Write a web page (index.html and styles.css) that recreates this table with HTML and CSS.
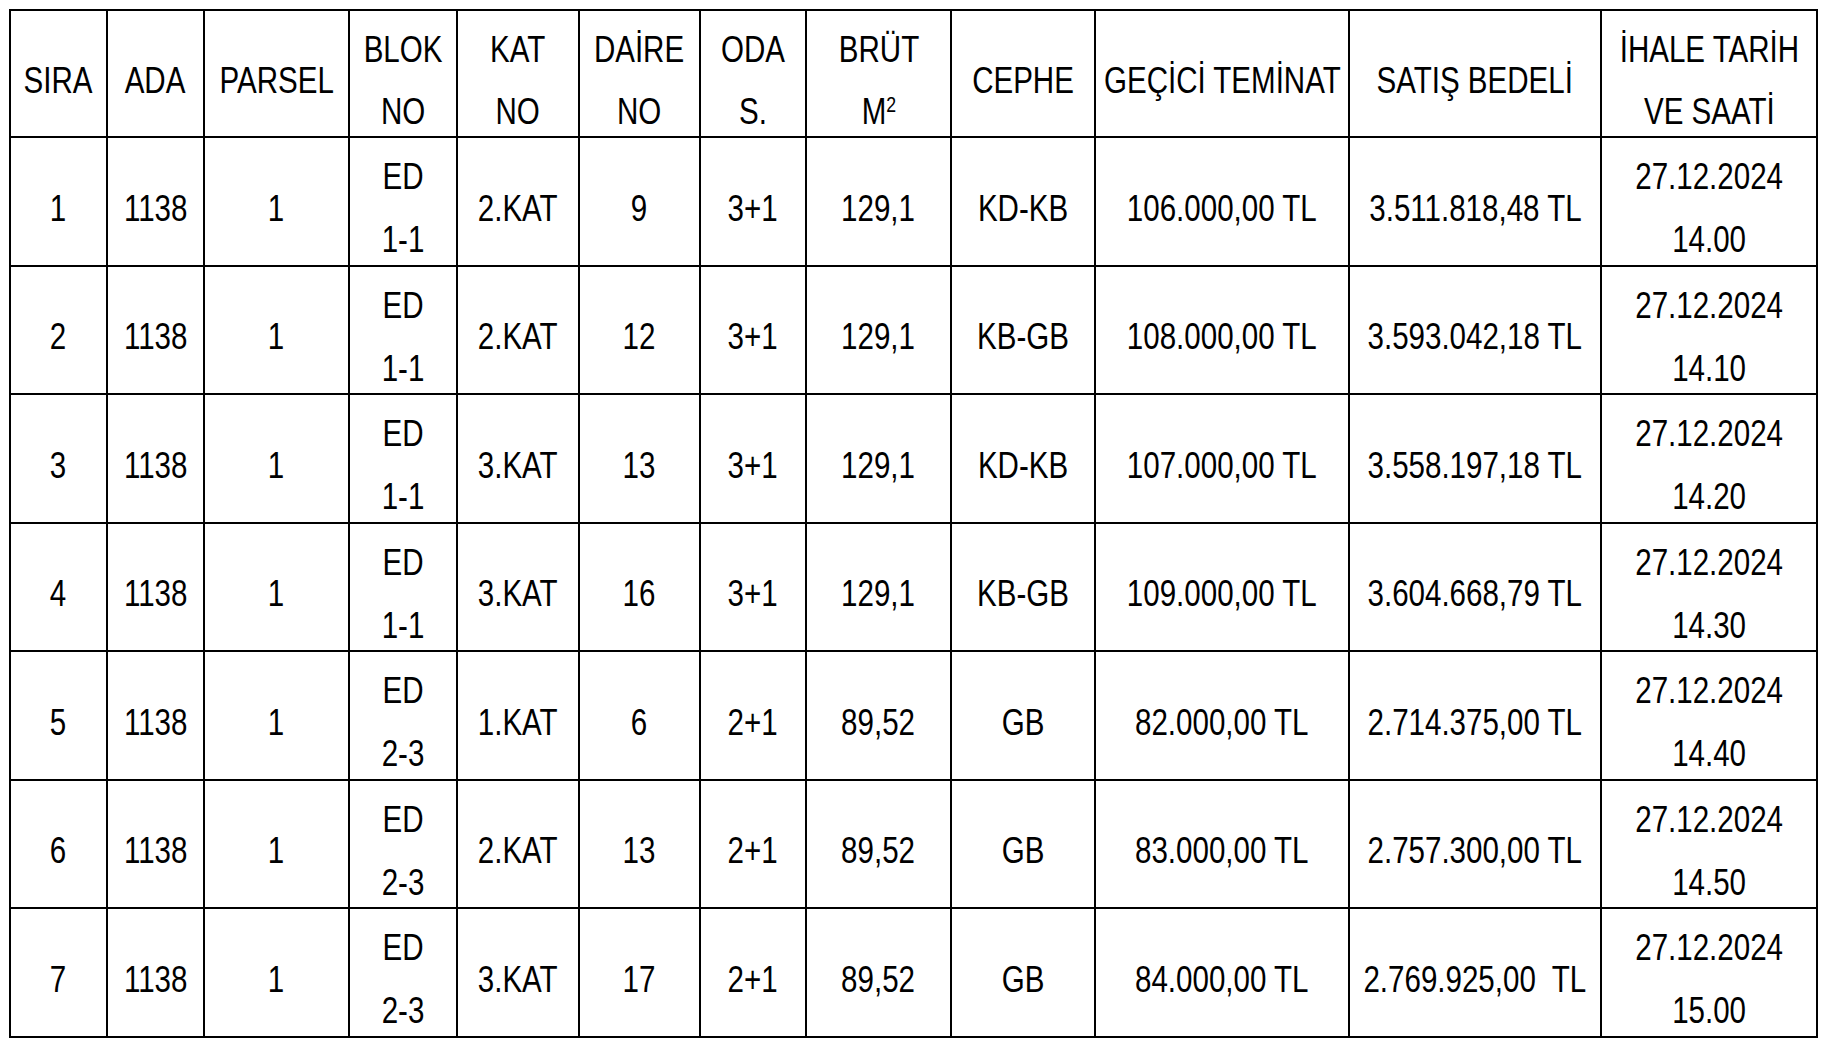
FILE: index.html
```html
<!DOCTYPE html>
<html lang="tr">
<head>
<meta charset="utf-8">
<title>İhale Listesi</title>
<link rel="stylesheet" href="styles.css">
</head>
<body>
<table class="grid">
  <colgroup>
    <col class="w-sira"><col class="w-ada"><col class="w-parsel"><col class="w-blok"><col class="w-kat"><col class="w-daire"><col class="w-oda"><col class="w-brut"><col class="w-cephe"><col class="w-teminat"><col class="w-bedel"><col class="w-tarih">
  </colgroup>
  <thead>
    <tr>
      <th><div class="v"><span class="t">SIRA</span></div></th>
      <th><div class="v"><span class="t">ADA</span></div></th>
      <th><div class="v"><span class="t">PARSEL</span></div></th>
      <th><div class="v"><span class="t">BLOK<br>NO</span></div></th>
      <th><div class="v"><span class="t">KAT<br>NO</span></div></th>
      <th><div class="v"><span class="t">DAİRE<br>NO</span></div></th>
      <th><div class="v"><span class="t">ODA<br>S.</span></div></th>
      <th><div class="v"><span class="t">BRÜT<br>M<sup>2</sup></span></div></th>
      <th><div class="v"><span class="t">CEPHE</span></div></th>
      <th><div class="v"><span class="t">GEÇİCİ TEMİNAT</span></div></th>
      <th><div class="v"><span class="t">SATIŞ BEDELİ</span></div></th>
      <th><div class="v"><span class="t">İHALE TARİH<br>VE SAATİ</span></div></th>
    </tr>
  </thead>
  <tbody>
    <tr>
      <td><div class="v"><span class="t">1</span></div></td><td><div class="v"><span class="t">1138</span></div></td><td><div class="v"><span class="t">1</span></div></td>
      <td><div class="v"><span class="t">ED<br>1-1</span></div></td><td><div class="v"><span class="t">2.KAT</span></div></td><td><div class="v"><span class="t">9</span></div></td>
      <td><div class="v"><span class="t">3+1</span></div></td><td><div class="v"><span class="t">129,1</span></div></td><td><div class="v"><span class="t">KD-KB</span></div></td>
      <td><div class="v"><span class="t">106.000,00 TL</span></div></td><td><div class="v"><span class="t">3.511.818,48 TL</span></div></td><td><div class="v"><span class="t">27.12.2024<br>14.00</span></div></td>
    </tr>
    <tr>
      <td><div class="v"><span class="t">2</span></div></td><td><div class="v"><span class="t">1138</span></div></td><td><div class="v"><span class="t">1</span></div></td>
      <td><div class="v"><span class="t">ED<br>1-1</span></div></td><td><div class="v"><span class="t">2.KAT</span></div></td><td><div class="v"><span class="t">12</span></div></td>
      <td><div class="v"><span class="t">3+1</span></div></td><td><div class="v"><span class="t">129,1</span></div></td><td><div class="v"><span class="t">KB-GB</span></div></td>
      <td><div class="v"><span class="t">108.000,00 TL</span></div></td><td><div class="v"><span class="t">3.593.042,18 TL</span></div></td><td><div class="v"><span class="t">27.12.2024<br>14.10</span></div></td>
    </tr>
    <tr>
      <td><div class="v"><span class="t">3</span></div></td><td><div class="v"><span class="t">1138</span></div></td><td><div class="v"><span class="t">1</span></div></td>
      <td><div class="v"><span class="t">ED<br>1-1</span></div></td><td><div class="v"><span class="t">3.KAT</span></div></td><td><div class="v"><span class="t">13</span></div></td>
      <td><div class="v"><span class="t">3+1</span></div></td><td><div class="v"><span class="t">129,1</span></div></td><td><div class="v"><span class="t">KD-KB</span></div></td>
      <td><div class="v"><span class="t">107.000,00 TL</span></div></td><td><div class="v"><span class="t">3.558.197,18 TL</span></div></td><td><div class="v"><span class="t">27.12.2024<br>14.20</span></div></td>
    </tr>
    <tr>
      <td><div class="v"><span class="t">4</span></div></td><td><div class="v"><span class="t">1138</span></div></td><td><div class="v"><span class="t">1</span></div></td>
      <td><div class="v"><span class="t">ED<br>1-1</span></div></td><td><div class="v"><span class="t">3.KAT</span></div></td><td><div class="v"><span class="t">16</span></div></td>
      <td><div class="v"><span class="t">3+1</span></div></td><td><div class="v"><span class="t">129,1</span></div></td><td><div class="v"><span class="t">KB-GB</span></div></td>
      <td><div class="v"><span class="t">109.000,00 TL</span></div></td><td><div class="v"><span class="t">3.604.668,79 TL</span></div></td><td><div class="v"><span class="t">27.12.2024<br>14.30</span></div></td>
    </tr>
    <tr>
      <td><div class="v"><span class="t">5</span></div></td><td><div class="v"><span class="t">1138</span></div></td><td><div class="v"><span class="t">1</span></div></td>
      <td><div class="v"><span class="t">ED<br>2-3</span></div></td><td><div class="v"><span class="t">1.KAT</span></div></td><td><div class="v"><span class="t">6</span></div></td>
      <td><div class="v"><span class="t">2+1</span></div></td><td><div class="v"><span class="t">89,52</span></div></td><td><div class="v"><span class="t">GB</span></div></td>
      <td><div class="v"><span class="t">82.000,00 TL</span></div></td><td><div class="v"><span class="t">2.714.375,00 TL</span></div></td><td><div class="v"><span class="t">27.12.2024<br>14.40</span></div></td>
    </tr>
    <tr>
      <td><div class="v"><span class="t">6</span></div></td><td><div class="v"><span class="t">1138</span></div></td><td><div class="v"><span class="t">1</span></div></td>
      <td><div class="v"><span class="t">ED<br>2-3</span></div></td><td><div class="v"><span class="t">2.KAT</span></div></td><td><div class="v"><span class="t">13</span></div></td>
      <td><div class="v"><span class="t">2+1</span></div></td><td><div class="v"><span class="t">89,52</span></div></td><td><div class="v"><span class="t">GB</span></div></td>
      <td><div class="v"><span class="t">83.000,00 TL</span></div></td><td><div class="v"><span class="t">2.757.300,00 TL</span></div></td><td><div class="v"><span class="t">27.12.2024<br>14.50</span></div></td>
    </tr>
    <tr>
      <td><div class="v"><span class="t">7</span></div></td><td><div class="v"><span class="t">1138</span></div></td><td><div class="v"><span class="t">1</span></div></td>
      <td><div class="v"><span class="t">ED<br>2-3</span></div></td><td><div class="v"><span class="t">3.KAT</span></div></td><td><div class="v"><span class="t">17</span></div></td>
      <td><div class="v"><span class="t">2+1</span></div></td><td><div class="v"><span class="t">89,52</span></div></td><td><div class="v"><span class="t">GB</span></div></td>
      <td><div class="v"><span class="t">84.000,00 TL</span></div></td><td><div class="v"><span class="t">2.769.925,00&nbsp; TL</span></div></td><td><div class="v"><span class="t">27.12.2024<br>15.00</span></div></td>
    </tr>
  </tbody>
</table>
</body>
</html>
```
FILE: styles.css
```css
html, body {
  margin: 0;
  padding: 0;
  background: #ffffff;
}

body {
  padding: 9px 0 0 9px;
  font-family: "Liberation Sans", Arial, sans-serif;
  font-size: 36px;
  color: #000;
}

.grid {
  border-collapse: separate;
  border-spacing: 0;
  table-layout: fixed;
  width: 1809px;
  border-left: 2px solid #000;
  border-top: 2px solid #000;
}

.w-sira { width: 97px; }
.w-ada { width: 97px; }
.w-parsel { width: 145px; }
.w-blok { width: 108px; }
.w-kat { width: 122px; }
.w-daire { width: 121px; }
.w-oda { width: 106px; }
.w-brut { width: 145px; }
.w-cephe { width: 144px; }
.w-teminat { width: 254px; }
.w-bedel { width: 252px; }
.w-tarih { width: 216px; }

.grid th,
.grid td {
  border-right: 2px solid #000;
  border-bottom: 2px solid #000;
  padding: 7px 0 0;
  text-align: center;
  vertical-align: middle;
  font-weight: normal;
  white-space: nowrap;
  overflow: visible;
}

.grid th {
  height: 118px;
  line-height: 62px;
}

.grid td {
  height: 119.5px;
  line-height: 63px;
}

.v {
  display: flex;
  justify-content: center;
  margin-bottom: -7px;
}

/* Arial Narrow proportions from Arial metrics */
.t {
  display: block;
  text-align: center;
  transform: scaleX(0.82);
  transform-origin: 50% 50%;
}

.grid sup {
  font-size: 60%;
  line-height: 0;
  vertical-align: 0.55em;
}
```
